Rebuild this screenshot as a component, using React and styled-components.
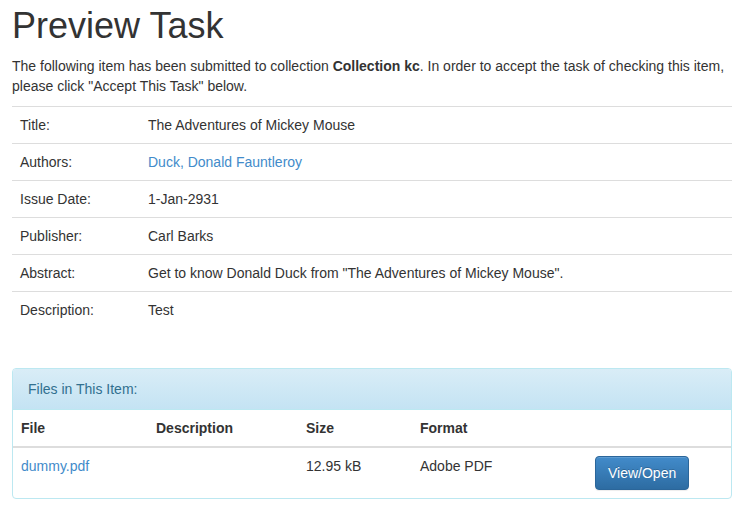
import React from "react";
import styled, { createGlobalStyle } from "styled-components";

const GlobalStyle = createGlobalStyle`
  html, body {
    margin: 0;
    padding: 0;
    background: #fff;
  }
  body {
    font-family: "Liberation Sans", Arial, sans-serif;
    font-size: 14px;
    line-height: 20px;
    color: #333;
  }
`;

const metadata = [
  { label: "Title:", value: "The Adventures of Mickey Mouse" },
  { label: "Authors:", value: "Duck, Donald Fauntleroy", link: true },
  { label: "Issue Date:", value: "1-Jan-2931" },
  { label: "Publisher:", value: "Carl Barks" },
  {
    label: "Abstract:",
    value: 'Get to know Donald Duck from "The Adventures of Mickey Mouse".',
  },
  { label: "Description:", value: "Test" },
];

const files = [
  { name: "dummy.pdf", description: "", size: "12.95 kB", format: "Adobe PDF" },
];

const App = () => {
  return (
    <Page>
      <GlobalStyle />
      <Title>Preview Task</Title>
      <Intro>
        The following item has been submitted to collection{" "}
        <strong>Collection kc</strong>. In order to accept the task of checking
        this item, please click "Accept This Task" below.
      </Intro>

      <MetaTable>
        <colgroup>
          <col style={{ width: 128 }} />
          <col />
        </colgroup>
        <tbody>
          {metadata.map((row) => (
            <tr key={row.label}>
              <MetaCell>{row.label}</MetaCell>
              <MetaCell>
                {row.link ? <Link href="#">{row.value}</Link> : row.value}
              </MetaCell>
            </tr>
          ))}
        </tbody>
      </MetaTable>

      <Panel>
        <PanelHeading>Files in This Item:</PanelHeading>
        <FileTable>
          <colgroup>
            <col style={{ width: 135 }} />
            <col style={{ width: 150 }} />
            <col style={{ width: 114 }} />
            <col style={{ width: 175 }} />
            <col />
          </colgroup>
          <thead>
            <tr>
              <HeadCell>File</HeadCell>
              <HeadCell>Description</HeadCell>
              <HeadCell>Size</HeadCell>
              <HeadCell>Format</HeadCell>
              <HeadCell />
            </tr>
          </thead>
          <tbody>
            {files.map((f) => (
              <tr key={f.name}>
                <FileCell>
                  <Link href="#">{f.name}</Link>
                </FileCell>
                <FileCell>{f.description}</FileCell>
                <FileCell>{f.size}</FileCell>
                <FileCell>{f.format}</FileCell>
                <FileCell>
                  <PrimaryButton>View/Open</PrimaryButton>
                </FileCell>
              </tr>
            ))}
          </tbody>
        </FileTable>
      </Panel>
    </Page>
  );
};

const Page = styled.div`
  width: 720px;
  padding: 6px 12px 12px;
`;

const Title = styled.h1`
  margin: 0 0 10px;
  font-size: 36px;
  font-weight: 500;
  line-height: 1.1;
  color: #333;
`;

const Intro = styled.p`
  margin: 0 0 10px;

  strong {
    font-weight: bold;
  }
`;

const MetaTable = styled.table`
  width: 100%;
  border-collapse: collapse;
  border-spacing: 0;
  table-layout: fixed;
  margin-bottom: 40px;
`;

const MetaCell = styled.td`
  padding: 8px;
  border-top: 1px solid #ddd;
  vertical-align: top;
`;

const Link = styled.a`
  color: #428bca;
  text-decoration: none;
`;

const Panel = styled.div`
  border: 1px solid #bce8f1;
  border-radius: 4px;
  background: #fff;
  overflow: hidden;
`;

const PanelHeading = styled.div`
  padding: 10px 15px;
  color: #31708f;
  background-image: linear-gradient(to bottom, #d9edf7 0, #c4e3f3 100%);
  border-bottom: 1px solid #bce8f1;
`;

const FileTable = styled.table`
  width: 100%;
  border-collapse: collapse;
  border-spacing: 0;
  table-layout: fixed;
`;

const HeadCell = styled.th`
  padding: 8px;
  text-align: left;
  font-weight: bold;
  border-bottom: 2px solid #ddd;
  vertical-align: bottom;
`;

const FileCell = styled.td`
  padding: 8px;
  vertical-align: top;
`;

const PrimaryButton = styled.button`
  display: inline-block;
  padding: 6px 12px;
  font-family: inherit;
  font-size: 14px;
  line-height: 20px;
  color: #fff;
  background-image: linear-gradient(to bottom, #428bca 0, #2d6ca2 100%);
  border: 1px solid #2b669a;
  border-radius: 4px;
  box-shadow: inset 0 1px 0 rgba(255, 255, 255, 0.15),
    0 1px 1px rgba(0, 0, 0, 0.075);
  text-shadow: 0 -1px 0 rgba(0, 0, 0, 0.2);
  cursor: pointer;
`;

export default App;
